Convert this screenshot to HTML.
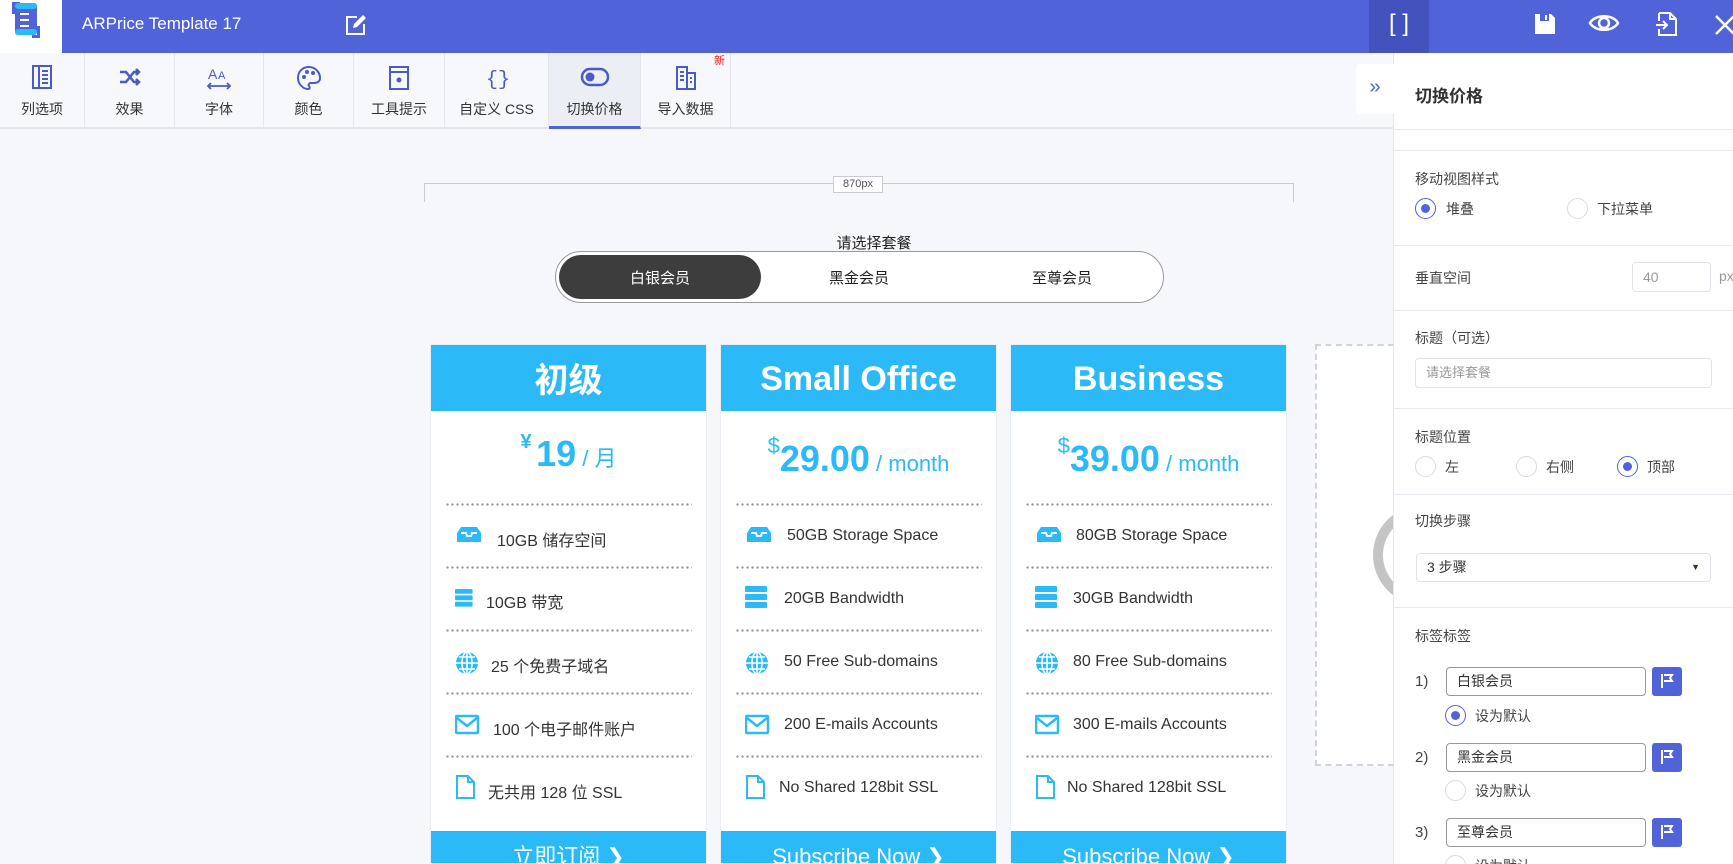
<!DOCTYPE html>
<html style="overflow:hidden;height:864px"><head><meta charset="utf-8"><style>
*{box-sizing:border-box;margin:0;padding:0}
body{width:1733px;height:864px;overflow:hidden;position:relative;background:#f6f7fb;font-family:"Liberation Sans","Noto Sans CJK SC",sans-serif;color:#333}
#wrap{position:absolute;left:0;top:0;width:1733px;height:864px;overflow:hidden}
.abs{position:absolute}
.top{left:0;top:0;width:1733px;height:53px;background:#5063d9}
.logo{left:0;top:0;width:62px;height:53px;background:#fff}
.tb{left:0;top:53px;width:1393px;height:76px;background:#f7f8fc;border-bottom:2px solid #e2e5ec}
.tab{position:absolute;top:0;height:74px;border-right:1px solid #e4e6ee;text-align:center;font-size:14px;color:#333}
.tab svg{position:absolute;left:50%;top:12px;transform:translateX(-50%)}
.tab span{position:absolute;left:0;right:0;top:46px}
.card{position:absolute;top:344px;width:277px;height:520px;background:#fff;border:1px solid #e9edf4;overflow:hidden}
.card .h{height:67px;background:#2bbaf7;color:#fff;font-weight:bold;font-size:34px;text-align:center;line-height:70px;margin:-1px -1px 0}
.price{position:absolute;top:86px;left:0;right:0;text-align:center;color:#2bbaf7;font-weight:bold}
.dot{position:absolute;left:14px;right:14px;height:3px;background-image:radial-gradient(circle,#999 1px,transparent 1.4px);background-size:5px 3px}
.f{position:absolute;left:0;font-size:16px;color:#333}
.f svg{position:absolute;left:24px;top:-2px}
.btn{position:absolute;left:0;right:0;top:486px;height:40px;background:#2bbaf7;color:#fff;font-size:22px;text-align:center;line-height:52px}
.rp{left:1393px;top:53px;width:340px;height:811px;background:#fff;border-left:1px solid #e3e6ee;overflow:hidden}
.line{position:absolute;left:0;right:0;height:1px;background:#e6e9ef}
.lbl{position:absolute;font-size:14px;color:#444}
.rad{position:absolute;width:21px;height:21px;border-radius:50%;border:1px solid #d6dbe6;background:#fff}
.rad.on{border-color:#5063d9}
.rad.on:after{content:"";position:absolute;left:5px;top:5px;width:9px;height:9px;border-radius:50%;background:#5063d9}
.inp{position:absolute;border:1px solid #dfe3ea;border-radius:4px;font-size:14px;color:#999;padding-left:10px}
.flag{position:absolute;width:30px;height:29px;background:#5063d9;border-radius:3px}
.flag svg{position:absolute;left:8px;top:6px}
</style></head><body><div id="wrap">
<div class="abs top"></div>
<div class="abs logo"><svg width="62" height="53"><rect x="12" y="2" width="3" height="12" fill="#5063d9"/><rect x="12" y="2" width="8" height="3" fill="#5063d9"/><rect x="15" y="3" width="22" height="32" rx="3" fill="#5063d9"/><rect x="15" y="3" width="22" height="6" rx="3" fill="#2bbaf7"/><rect x="15" y="29" width="22" height="6" rx="3" fill="#2bbaf7"/><rect x="20" y="13" width="9" height="2" fill="#fff"/><rect x="20" y="19" width="9" height="2" fill="#fff"/><rect x="20" y="25" width="9" height="2" fill="#fff"/><rect x="37" y="26" width="3" height="12" fill="#5063d9"/><rect x="32" y="35" width="8" height="3" fill="#5063d9"/></svg></div>
<div class="abs" style="left:82px;top:14px;color:#fff;font-size:17px">ARPrice Template 17</div>
<svg class="abs" style="left:344px;top:13px" width="24" height="24" viewBox="0 0 24 24"><path d="M13 4H3v17h17V11" fill="none" stroke="#fff" stroke-width="2"/><path d="M19 2l3 3-9 9-4 1 1-4z" fill="#fff"/></svg>
<div class="abs" style="left:1369px;top:0;width:60px;height:53px;background:#4352bd;color:#fff;font-size:24px;text-align:center;line-height:48px">[ ]</div>
<svg class="abs" style="left:1533px;top:12px" width="24" height="24" viewBox="0 0 24 24"><path d="M2 2h16l4 4v16H2z" fill="#fff"/><rect x="7" y="2" width="9" height="7" fill="#5063d9"/><rect x="12" y="3" width="2" height="5" fill="#fff"/></svg>
<svg class="abs" style="left:1588px;top:11px" width="32" height="24" viewBox="0 0 32 24"><path d="M2 12C7 3 25 3 30 12 25 21 7 21 2 12z" fill="none" stroke="#fff" stroke-width="2.5"/><circle cx="16" cy="12" r="5" fill="none" stroke="#fff" stroke-width="2.5"/></svg>
<svg class="abs" style="left:1655px;top:11px" width="24" height="26" viewBox="0 0 24 26"><path d="M4 2h11l6 6v16H4v-6M4 10V2M15 2v6h6" fill="none" stroke="#fff" stroke-width="2"/><path d="M1 14h11M8 10l4 4-4 4" fill="none" stroke="#fff" stroke-width="2"/></svg>
<svg class="abs" style="left:1714px;top:14px" width="22" height="22"><path d="M2 2l18 18M20 2L2 20" stroke="#fff" stroke-width="2.5"/></svg>

<div class="abs tb">
<div class="tab" style="left:0;width:85px"><svg width="22" height="24"><rect x="2" y="1" width="18" height="22" fill="none" stroke="#4a5bc8" stroke-width="2"/><path d="M8 1v22M11 6h6M11 10h6M11 14h6M11 18h6" stroke="#4a5bc8" stroke-width="2"/></svg><span>列选项</span></div>
<div class="tab" style="left:85px;width:90px"><svg width="24" height="24"><path d="M2 7h6l8 10h5M2 17h6l8-10h5M18 4l3 3-3 3M18 14l3 3-3 3" fill="none" stroke="#4a5bc8" stroke-width="2.5"/></svg><span>效果</span></div>
<div class="tab" style="left:175px;width:89px"><svg width="26" height="26"><text x="2" y="14" font-size="14" fill="#4a5bc8" font-family="Liberation Sans">A</text><text x="12" y="14" font-size="11" fill="#4a5bc8" font-family="Liberation Sans">A</text><path d="M2 21h22M5 18l-3 3 3 3M21 18l3 3-3 3" fill="none" stroke="#4a5bc8" stroke-width="1.8"/></svg><span>字体</span></div>
<div class="tab" style="left:264px;width:90px"><svg width="26" height="26"><path d="M13 2C6 2 2 7 2 13s5 11 10 11c2 0 2-2 1-3s0-3 2-3h3c4 0 6-2 6-5 0-6-5-11-11-11z" fill="none" stroke="#4a5bc8" stroke-width="2"/><circle cx="8" cy="12" r="2" fill="#4a5bc8"/><circle cx="11" cy="7" r="2" fill="#4a5bc8"/><circle cx="17" cy="8" r="2" fill="#4a5bc8"/></svg><span>颜色</span></div>
<div class="tab" style="left:354px;width:91px"><svg width="22" height="26"><rect x="2" y="2" width="18" height="22" fill="none" stroke="#4a5bc8" stroke-width="2"/><path d="M2 7h18" stroke="#4a5bc8" stroke-width="2"/><circle cx="11" cy="15" r="2.5" fill="#4a5bc8"/></svg><span>工具提示</span></div>
<div class="tab" style="left:445px;width:104px"><svg width="24" height="26"><text x="1" y="20" font-size="20" fill="#4a5bc8" font-family="Liberation Mono">{}</text></svg><span>自定义 CSS</span></div>
<div class="tab" style="left:549px;width:92px;background:#eceef6;border-bottom:3px solid #5063d9;height:76px"><svg width="30" height="24"><rect x="2" y="4" width="26" height="16" rx="8" fill="none" stroke="#4a5bc8" stroke-width="2.5"/><circle cx="10" cy="12" r="4.5" fill="#4a5bc8"/></svg><span>切换价格</span></div>
<div class="tab" style="left:641px;width:90px"><svg width="24" height="28"><rect x="3" y="2" width="10" height="22" fill="none" stroke="#4a5bc8" stroke-width="2"/><rect x="13" y="8" width="8" height="16" fill="none" stroke="#4a5bc8" stroke-width="2"/><path d="M6 7h4M6 11h4M6 15h4M16 13h2M16 17h2" stroke="#4a5bc8" stroke-width="2"/></svg><span>导入数据</span><div style="position:absolute;left:73px;top:-1px;color:#e22;font-size:11px">新</div></div>
</div>

<div class="abs" style="left:424px;top:183px;width:870px;height:19px;border:1px solid #c8cbd2;border-bottom:none"></div>
<div class="abs" style="left:833px;top:176px;width:50px;height:17px;background:#fff;border:1px solid #c8cbd2;font-size:11px;text-align:center;line-height:15px;color:#555">870px</div>
<div class="abs" style="left:774px;top:232px;width:200px;text-align:center;font-size:15px;color:#222">请选择套餐</div>
<div class="abs" style="left:555px;top:251px;width:609px;height:52px;border:1px solid #999;border-radius:26px;background:#fff"></div>
<div class="abs" style="left:559px;top:255px;width:202px;height:44px;border-radius:22px;background:#3d3d3d"></div>
<div class="abs" style="left:559px;top:267px;width:202px;text-align:center;color:#fff;font-size:15px">白银会员</div>
<div class="abs" style="left:759px;top:267px;width:200px;text-align:center;color:#222;font-size:15px">黑金会员</div>
<div class="abs" style="left:962px;top:267px;width:200px;text-align:center;color:#222;font-size:15px">至尊会员</div>

<svg width="0" height="0" style="position:absolute"><defs>
<g id="i1"><path d="M2 8l4-6h16l4 6v9H2z" fill="#2bbaf7"/><path d="M6 8h5l1 3h4l1-3h5" fill="none" stroke="#fff" stroke-width="2"/></g>
<g id="i2"><rect x="0" y="0" width="22" height="6" rx="1" fill="#2bbaf7"/><rect x="0" y="8" width="22" height="6" rx="1" fill="#2bbaf7"/><rect x="0" y="16" width="22" height="6" rx="1" fill="#2bbaf7"/></g>
<g id="i3"><circle cx="12" cy="12" r="11" fill="#2bbaf7"/><path d="M1 12h22M12 1v22M4 6h16M4 18h16" stroke="#fff" stroke-width="1.6"/><ellipse cx="12" cy="12" rx="5" ry="11" fill="none" stroke="#fff" stroke-width="1.6"/></g>
<g id="i4"><rect x="1" y="2" width="22" height="17" rx="1" fill="none" stroke="#2bbaf7" stroke-width="2.5"/><path d="M2 4l10 8 10-8" fill="none" stroke="#2bbaf7" stroke-width="2.5"/></g>
<g id="i5"><path d="M2 1h11l6 6v16H2z" fill="none" stroke="#2bbaf7" stroke-width="2"/><path d="M13 1v6h6" fill="none" stroke="#2bbaf7" stroke-width="2"/></g>
</defs></svg>

<div class="card" style="left:430px">
<div class="h" style="font-family:'Noto Sans CJK SC',sans-serif;line-height:67px">初级</div>
<div class="price" style="top:86px"><span style="font-size:20px;vertical-align:18px">¥</span> <span style="font-size:36px">19</span><span style="font-size:22px;font-weight:normal"> / 月</span></div>
<div class="dot" style="top:158px"></div><div class="dot" style="top:221px"></div><div class="dot" style="top:284px"></div><div class="dot" style="top:347px"></div><div class="dot" style="top:410px"></div>
<div class="f" style="top:182px;padding-left:66px"><svg width="28" height="20"><use href="#i1"/></svg>10GB 储存空间</div>
<div class="f" style="top:244px;padding-left:55px"><svg width="24" height="22" style="top:0"><use href="#i2" transform="scale(.8)"/></svg>10GB 带宽</div>
<div class="f" style="top:308px;padding-left:60px"><svg width="24" height="24"><use href="#i3"/></svg>25 个免费子域名</div>
<div class="f" style="top:371px;padding-left:62px"><svg width="26" height="22"><use href="#i4"/></svg>100 个电子邮件账户</div>
<div class="f" style="top:434px;padding-left:57px"><svg width="22" height="26" style="top:-4px"><use href="#i5"/></svg>无共用 128 位 SSL</div>
<div class="btn">立即订阅 ❯</div>
</div>

<div class="card" style="left:720px">
<div class="h">Small Office</div>
<div class="price" style="top:88px"><span style="font-size:22px;font-weight:normal;vertical-align:18px">$</span><span style="font-size:36px">29.00</span><span style="font-size:22px;font-weight:normal"> / month</span></div>
<div class="dot" style="top:158px"></div><div class="dot" style="top:221px"></div><div class="dot" style="top:284px"></div><div class="dot" style="top:347px"></div><div class="dot" style="top:410px"></div>
<div class="f" style="top:182px;padding-left:66px"><svg width="28" height="20"><use href="#i1"/></svg>50GB Storage Space</div>
<div class="f" style="top:245px;padding-left:63px"><svg width="24" height="24" style="top:-4px"><use href="#i2"/></svg>20GB Bandwidth</div>
<div class="f" style="top:308px;padding-left:63px"><svg width="24" height="24"><use href="#i3"/></svg>50 Free Sub-domains</div>
<div class="f" style="top:371px;padding-left:63px"><svg width="26" height="22"><use href="#i4"/></svg>200 E-mails Accounts</div>
<div class="f" style="top:434px;padding-left:58px"><svg width="22" height="26" style="top:-4px"><use href="#i5"/></svg>No Shared 128bit SSL</div>
<div class="btn">Subscribe Now ❯</div>
</div>

<div class="card" style="left:1010px">
<div class="h">Business</div>
<div class="price" style="top:88px"><span style="font-size:22px;font-weight:normal;vertical-align:18px">$</span><span style="font-size:36px">39.00</span><span style="font-size:22px;font-weight:normal"> / month</span></div>
<div class="dot" style="top:158px"></div><div class="dot" style="top:221px"></div><div class="dot" style="top:284px"></div><div class="dot" style="top:347px"></div><div class="dot" style="top:410px"></div>
<div class="f" style="top:182px;padding-left:65px"><svg width="28" height="20"><use href="#i1"/></svg>80GB Storage Space</div>
<div class="f" style="top:245px;padding-left:62px"><svg width="24" height="24" style="top:-4px"><use href="#i2"/></svg>30GB Bandwidth</div>
<div class="f" style="top:308px;padding-left:62px"><svg width="24" height="24"><use href="#i3"/></svg>80 Free Sub-domains</div>
<div class="f" style="top:371px;padding-left:62px"><svg width="26" height="22"><use href="#i4"/></svg>300 E-mails Accounts</div>
<div class="f" style="top:434px;padding-left:56px"><svg width="22" height="26" style="top:-4px"><use href="#i5"/></svg>No Shared 128bit SSL</div>
<div class="btn">Subscribe Now ❯</div>
</div>

<div class="abs" style="left:1315px;top:344px;width:100px;height:422px;border:2px dashed #cfd3da;background:#fff"></div>
<div class="abs" style="left:1373px;top:505px;width:100px;height:100px;border-radius:50%;border:10px solid #c4c4c4"></div>

<div class="abs rp">
<div class="line" style="top:76px"></div><div class="line" style="top:97px"></div>
<div style="position:absolute;left:21px;top:29px;font-size:17px;font-weight:bold;color:#333">切换价格</div>
<div class="lbl" style="left:21px;top:116px">移动视图样式</div>
<div class="rad on" style="left:21px;top:145px"></div><div class="lbl" style="left:52px;top:146px">堆叠</div>
<div class="rad" style="left:173px;top:145px"></div><div class="lbl" style="left:203px;top:146px">下拉菜单</div>
<div class="line" style="top:192px"></div>
<div class="lbl" style="left:21px;top:215px">垂直空间</div>
<div class="inp" style="left:238px;top:209px;width:79px;height:30px;line-height:28px">40</div>
<div class="lbl" style="left:325px;top:215px;color:#999">px</div>
<div class="line" style="top:257px"></div>
<div class="lbl" style="left:21px;top:275px">标题（可选）</div>
<div class="inp" style="left:21px;top:305px;width:297px;height:30px;line-height:28px;font-size:13px">请选择套餐</div>
<div class="line" style="top:355px"></div>
<div class="lbl" style="left:21px;top:374px">标题位置</div>
<div class="rad" style="left:21px;top:403px"></div><div class="lbl" style="left:51px;top:404px">左</div>
<div class="rad" style="left:122px;top:403px"></div><div class="lbl" style="left:152px;top:404px">右侧</div>
<div class="rad on" style="left:223px;top:403px"></div><div class="lbl" style="left:253px;top:404px">顶部</div>
<div class="line" style="top:441px"></div>
<div class="lbl" style="left:21px;top:458px">切换步骤</div>
<div class="inp" style="left:22px;top:500px;width:295px;height:29px;line-height:27px;color:#333">3 步骤<span style="position:absolute;right:10px;top:0;font-size:9px">▼</span></div>
<div class="line" style="top:554px"></div>
<div class="lbl" style="left:21px;top:573px">标签标签</div>
<div class="lbl" style="left:21px;top:620px;font-size:15px">1)</div>
<div class="inp" style="left:52px;top:614px;width:200px;height:29px;line-height:27px;color:#333;border-color:#999">白银会员</div>
<div class="flag" style="left:258px;top:614px"><svg width="14" height="16"><path d="M2 1v14M4 2h8l-2 3 2 3H4" fill="none" stroke="#fff" stroke-width="2"/></svg></div>
<div class="rad on" style="left:51px;top:652px"></div><div class="lbl" style="left:81px;top:653px">设为默认</div>
<div class="lbl" style="left:21px;top:696px;font-size:15px">2)</div>
<div class="inp" style="left:52px;top:690px;width:200px;height:29px;line-height:27px;color:#333;border-color:#999">黑金会员</div>
<div class="flag" style="left:258px;top:690px"><svg width="14" height="16"><path d="M2 1v14M4 2h8l-2 3 2 3H4" fill="none" stroke="#fff" stroke-width="2"/></svg></div>
<div class="rad" style="left:51px;top:727px"></div><div class="lbl" style="left:81px;top:728px">设为默认</div>
<div class="lbl" style="left:21px;top:771px;font-size:15px">3)</div>
<div class="inp" style="left:52px;top:765px;width:200px;height:29px;line-height:27px;color:#333;border-color:#999">至尊会员</div>
<div class="flag" style="left:258px;top:765px"><svg width="14" height="16"><path d="M2 1v14M4 2h8l-2 3 2 3H4" fill="none" stroke="#fff" stroke-width="2"/></svg></div>
<div class="rad" style="left:51px;top:802px"></div><div class="lbl" style="left:81px;top:803px">设为默认</div>
</div>
<div class="abs" style="left:1356px;top:64px;width:38px;height:50px;background:#fff;border-radius:4px 0 0 4px;color:#5063d9;font-size:20px;text-align:center;line-height:46px">»</div>
</div></body></html>
